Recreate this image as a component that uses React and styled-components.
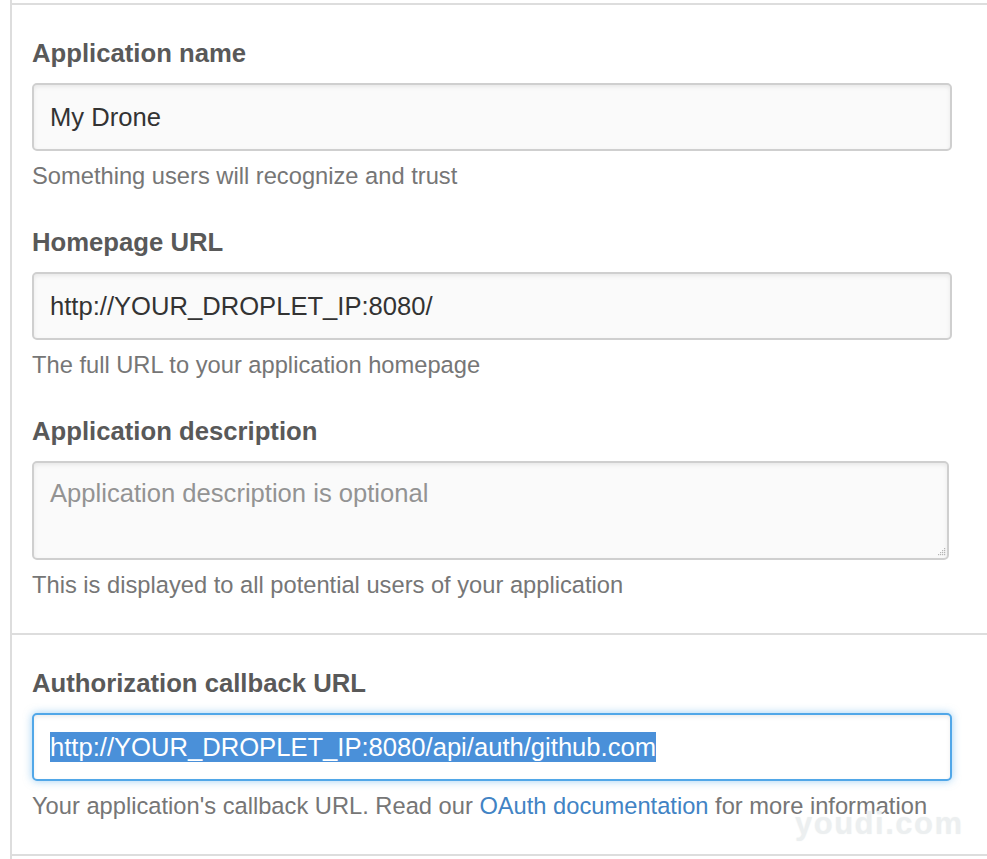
import React from "react";
import styled, { createGlobalStyle } from "styled-components";

const Global = createGlobalStyle`
  html, body { margin: 0; padding: 0; background: #fff; }
  body { font-family: "Liberation Sans", Arial, Helvetica, sans-serif; }
  * { box-sizing: border-box; }
`;

const Column = styled.div`
  margin-left: 10px;
  min-height: 100vh;
  border-left: 2px solid #ddd;
  padding-top: 3px;
  position: relative;
`;

const Section = styled.section`
  display: flex;
  flex-direction: column;
  gap: 31px;
  padding: 30px 35px 31px 20px;
  border-top: ${(p) => (p.$first ? "2px solid #ddd" : "0")};
  border-bottom: 2px solid #ddd;
`;

const Field = styled.div`
  display: flex;
  flex-direction: column;
`;

const Label = styled.label`
  display: block;
  font-size: 25.7px;
  line-height: 36px;
  font-weight: bold;
  color: #595959;
  margin-bottom: 12px;
`;

const inputBase = `
  display: block;
  width: 100%;
  height: 68px;
  padding: 0 16px;
  font-family: "Liberation Sans", Arial, Helvetica, sans-serif;
  font-size: 25.6px;
  color: #333;
  border-radius: 5px;
  outline: none;
`;

const TextInput = styled.input`
  ${inputBase}
  background: #fafafa;
  border: 2px solid #cfcfcf;
  box-shadow: inset 0 2px 4px rgba(0, 0, 0, 0.075);
`;

const FocusedInput = styled.div`
  ${inputBase}
  display: flex;
  align-items: center;
  background: #fff;
  border: 2px solid #51a7e8;
  box-shadow: inset 0 2px 4px rgba(0, 0, 0, 0.075),
    0 0 9px rgba(81, 167, 232, 0.55);
  white-space: nowrap;
`;

const Selected = styled.span`
  background: #4a90d9;
  color: #fff;
  line-height: 30px;
  display: inline-block;
`;

const AreaWrap = styled.div`
  position: relative;
  width: 917px;
`;

const TextArea = styled.textarea`
  display: block;
  width: 100%;
  height: 99px;
  padding: 13px 16px;
  font-family: "Liberation Sans", Arial, Helvetica, sans-serif;
  font-size: 25.6px;
  line-height: 1.4;
  color: #333;
  background: #fafafa;
  border: 2px solid #cfcfcf;
  border-radius: 5px;
  box-shadow: inset 0 2px 4px rgba(0, 0, 0, 0.075);
  resize: none;
  outline: none;
  &::placeholder { color: #939393; opacity: 1; }
`;

const Grip = styled.svg`
  position: absolute;
  right: 3px;
  bottom: 3px;
  width: 10px;
  height: 10px;
`;

const Note = styled.p`
  margin: 9px 0 0;
  font-size: 23.7px;
  line-height: 33px;
  color: #767676;
  white-space: nowrap;
`;

const Link = styled.a`
  color: #4183c4;
  text-decoration: none;
`;

const Watermark = styled.div`
  position: absolute;
  left: 783px;
  top: 806px;
  font-family: "Liberation Sans", Arial, sans-serif;
  font-weight: bold;
  font-size: 31px;
  letter-spacing: 1.5px;
  color: #eceff0;
  text-shadow: 0 0 2px #f4f6f6;
  pointer-events: none;
`;

export default function App() {
  return (
    <>
      <Global />
      <Column>
        <Section $first>
          <Field>
            <Label>Application name</Label>
            <TextInput readOnly defaultValue="My Drone" />
            <Note>Something users will recognize and trust</Note>
          </Field>
          <Field>
            <Label>Homepage URL</Label>
            <TextInput readOnly defaultValue="http://YOUR_DROPLET_IP:8080/" />
            <Note>The full URL to your application homepage</Note>
          </Field>
          <Field>
            <Label>Application description</Label>
            <AreaWrap>
              <TextArea readOnly placeholder="Application description is optional" />
              <Grip viewBox="0 0 10 10">
                {[
                  [8, 1], [8, 3], [6, 3], [8, 5], [6, 5], [4, 5],
                  [8, 7], [6, 7], [4, 7], [2, 7],
                ].map(([x, y]) => (
                  <rect key={`${x}-${y}`} x={x} y={y} width="1.2" height="1.2" fill="#b5b5b5" />
                ))}
              </Grip>
            </AreaWrap>
            <Note>This is displayed to all potential users of your application</Note>
          </Field>
        </Section>
        <Section>
          <Field>
            <Label>Authorization callback URL</Label>
            <FocusedInput>
              <Selected>http://YOUR_DROPLET_IP:8080/api/auth/github.com</Selected>
            </FocusedInput>
            <Note>
              Your application's callback URL. Read our{" "}
              <Link href="#">OAuth documentation</Link> for more information
            </Note>
          </Field>
        </Section>
        <Watermark>youdi.com</Watermark>
      </Column>
    </>
  );
}
